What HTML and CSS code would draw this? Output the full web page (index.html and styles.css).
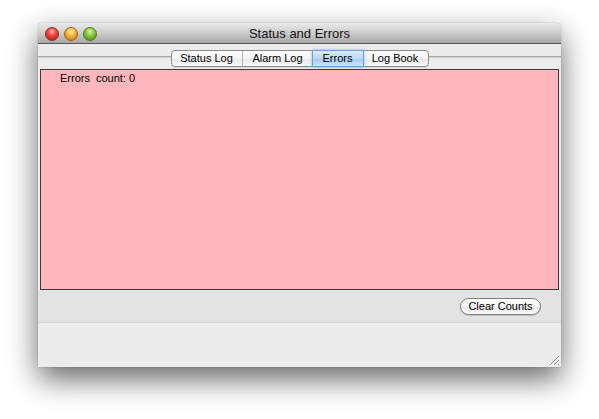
FILE: index.html
```html
<!DOCTYPE html>
<html>
<head>
<meta charset="utf-8">
<link rel="stylesheet" href="styles.css">
</head>
<body>
<div class="window">
  <div class="titlebar">
    <div class="lights">
      <span class="light red"></span>
      <span class="light yellow"></span>
      <span class="light green"></span>
    </div>
    <div class="title">Status and Errors</div>
    <div></div>
  </div>
  <div class="tabrow">
    <div class="tabs">
      <span class="tab t1">Status Log</span>
      <span class="tab t2">Alarm Log</span>
      <span class="tab t3 selected">Errors</span>
      <span class="tab t4">Log Book</span>
    </div>
  </div>
  <div class="errors">
    <span class="label">Errors</span><span class="count">count: 0</span>
  </div>
  <div class="actions">
    <button class="btn">Clear Counts</button>
  </div>
  <div class="footer">
    <svg class="grip" width="12" height="12" viewBox="0 0 12 12">
      <path d="M11 2 L2 11 M11 6 L6 11 M11 10 L10 11" stroke="#8a8a8a" stroke-width="1"/>
      <path d="M11.5 3 L3 11.5 M11.5 7 L7 11.5" stroke="#fff" stroke-width="1"/>
    </svg>
  </div>
</div>
</body>
</html>
```
FILE: styles.css
```css
html, body {
  margin: 0;
  padding: 0;
  background: #ffffff;
}
body {
  font-family: "Liberation Sans", Arial, sans-serif;
  width: 599px;
  height: 419px;
  overflow: hidden;
}
.window {
  margin: 23px 0 0 38px;
  width: 523px;
  height: 344px;
  background: #ececec;
  display: flex;
  flex-direction: column;
  box-shadow: 0 12px 30px rgba(0,0,0,0.6), 0 0 1px rgba(0,0,0,0.5);
  border-radius: 4px 4px 0 0;
}
.titlebar {
  height: 20px;
  flex: none;
  display: grid;
  grid-template-columns: 1fr auto 1fr;
  align-items: center;
  background: linear-gradient(to bottom, #e9e9e9 0%, #cfcfcf 45%, #a7a7a7 100%);
  border-bottom: 1px solid #555555;
  border-radius: 4px 4px 0 0;
}
.lights {
  display: flex;
  gap: 5px;
  padding-left: 7px;
  padding-top: 1px;
}
.light {
  width: 14px;
  height: 14px;
  border-radius: 50%;
  box-sizing: border-box;
}
.red {
  background: radial-gradient(circle at 50% 30%, #ffb5b0 0%, #f0443c 40%, #b3120c 100%);
  border: 1px solid #8a2a22;
}
.yellow {
  background: radial-gradient(circle at 50% 30%, #fff1a8 0%, #f5b43a 42%, #c26d0c 100%);
  border: 1px solid #9a6315;
}
.green {
  background: radial-gradient(circle at 50% 30%, #dbf5a8 0%, #85c63d 42%, #3f8a12 100%);
  border: 1px solid #4d7a20;
}
.title {
  font-size: 13px;
  color: #111;
  padding-top: 1px;
}
.tabrow {
  height: 25px;
  flex: none;
  display: flex;
  justify-content: center;
  align-items: flex-start;
  box-sizing: border-box;
  padding-top: 6px;
  background: linear-gradient(to bottom, transparent 12px, #a9a9a9 12px, #a9a9a9 13px, #cfcfcf 13px, #cfcfcf 14px, transparent 14px);
}
.tabs {
  display: flex;
  height: 17px;
  box-sizing: border-box;
  border: 1px solid #8a8a8a;
  border-radius: 4px;
  background: linear-gradient(to bottom, #ffffff 0%, #f4f4f4 50%, #e9e9e9 51%, #f8f8f8 100%);
  box-shadow: 0 1px 0 rgba(0,0,0,0.08);
}
.tab {
  font-size: 11px;
  color: #000;
  line-height: 15px;
  text-align: center;
  box-sizing: border-box;
}
.t1 { width: 71px; border-right: 1px solid #b5b5b5; }
.t2 { width: 70px; }
.t3 { width: 50px; }
.t4 { width: 65px; }
.selected {
  background: linear-gradient(to bottom, #dcebfb 0%, #bcd7f5 50%, #a6c8ef 51%, #cfe3f9 100%);
  box-shadow: 0 0 0 1px #6f9fd6, 0 0 3px 1px #8ab6ec;
  position: relative;
}
.errors {
  margin: 0 2px;
  height: 221px;
  flex: none;
  box-sizing: border-box;
  border: 1px solid #3a3a3a;
  background: #ffb7bd;
  font-size: 11px;
  color: #000;
  padding: 2px 0 0 19px;
  line-height: 13px;
}
.label {
  margin-right: 6px;
}
.actions {
  height: 33px;
  flex: none;
  background: #e3e3e3;
  border-bottom: 1px solid #d6d6d6;
  display: flex;
  justify-content: flex-end;
  align-items: flex-start;
  padding: 8px 20px 0 0;
  box-sizing: border-box;
}
.btn {
  font-family: "Liberation Sans", Arial, sans-serif;
  font-size: 11px;
  color: #000;
  width: 81px;
  height: 17px;
  padding: 0;
  line-height: 15px;
  border: 1px solid #7a7a7a;
  border-radius: 9px;
  background: linear-gradient(to bottom, #ffffff 0%, #f3f3f3 50%, #e6e6e6 51%, #fafafa 100%);
  box-shadow: 0 1px 1px rgba(0,0,0,0.15);
}
.footer {
  flex: 1;
  position: relative;
  background: #ececec;
}
.grip {
  position: absolute;
  right: 1px;
  bottom: 1px;
}
```
